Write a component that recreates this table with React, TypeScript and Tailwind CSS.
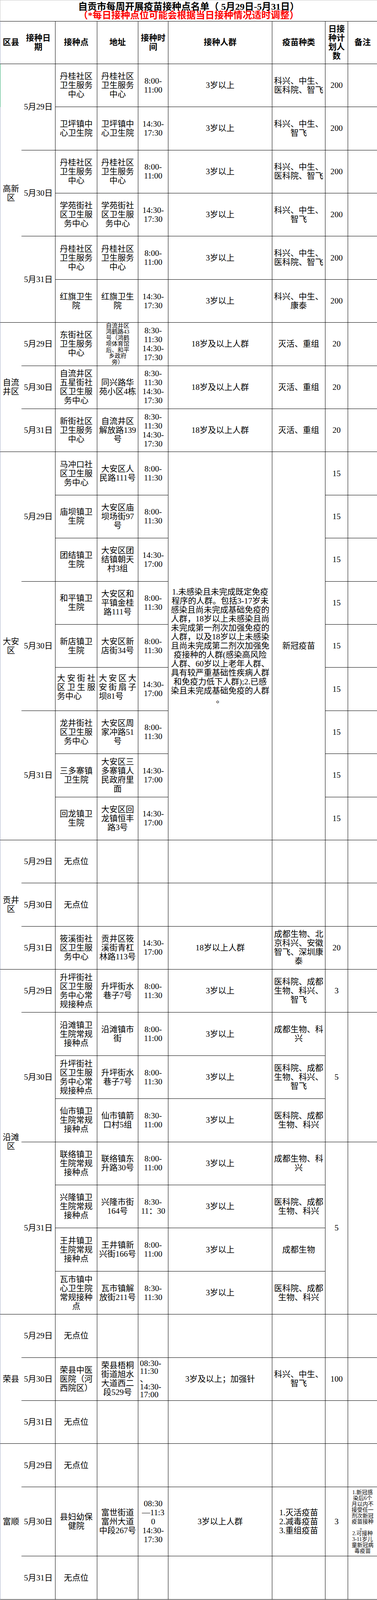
import React from "react";

type Cell = { t: React.ReactNode; s?: number; c?: string } | null;
type Row = { tall?: boolean; cells: Cell[] };

// explicit line breaks, the sheet wraps these cells by hand
const L = (...lines: string[]) =>
  lines.map((l, i) => (
    <React.Fragment key={i}>
      {i > 0 && <br />}
      {l}
    </React.Fragment>
  ));

const c = (t: React.ReactNode, s?: number, cls?: string): Cell => ({ t, s, c: cls });
const E: Cell = { t: "" };
const N: Cell = null;

// distributed lines (excel "分散对齐")
function Spread({ lines, last }: { lines: string[]; last: string }) {
  return (
    <div className="pb-[10px]">
      {lines.map((l) => (
        <div key={l} className="flex justify-between">
          {Array.from(l).map((ch, i) => (
            <span key={i}>{ch}</span>
          ))}
        </div>
      ))}
      <div className="text-left">{last}</div>
    </div>
  );
}

const dan = "丹桂社区卫生服务中心";
const sp = "升坪街社区卫生服务中心常规接种点";
const t8_11 = L("8:00-", "11:00");
const t8_1130 = L("8:00-", "11:30");
const t1430_1730 = L("14:30-", "17:30");
const t1430_1700 = L("14:30-", "17:00");
const tZ = L("8:30-", "11:30", "14:30-", "17:30");
const v4 = L("科兴、中生、", "医科院、智飞");
const v3 = L("科兴、中生、", "智飞");
const vYCKZ = L("医科院、成都", "生物、科兴、", "智飞");
const vCK = L("成都生物、科", "兴");
const vYCK = L("医科院、成都", "生物、科兴");

const daan = [
  "1.未感染且未完成既定免疫",
  "程序的人群。包括3-17岁未",
  "感染且尚未完成基础免疫的",
  "人群，18岁以上未感染且尚",
  "未完成第一剂次加强免疫的",
  "人群，以及18岁以上未感染",
  "且尚未完成第二剂次加强免",
  "疫接种的人群(感染高风险",
  "人群、60岁以上老年人群、",
  "具有较严重基础性疾病人群",
  "和免疫力低下人群);2.已感",
  "染且未完成基础免疫的人群",
  "。",
];

const none = (date: string): Cell[] => [c(date), c("无点位"), E, E, E, E, E, E];

const ROWS: Row[] = [
  // 高新区
  { cells: [c("高新区", 6), c("5月29日", 2), c(dan), c(dan), c(t8_11), c("3岁以上"), c(v4), c("200"), E] },
  { cells: [N, N, c("卫坪镇中心卫生院"), c("卫坪镇中心卫生院"), c(t1430_1730), c("3岁以上"), c(v3), c("200"), E] },
  { cells: [N, c("5月30日", 2), c(dan), c(dan), c(t8_11), c("3岁以上"), c(v4), c("200"), E] },
  { cells: [N, N, c("学苑街社区卫生服务中心"), c("学苑街社区卫生服务中心"), c(t1430_1730), c("3岁以上"), c(v3), c("200"), E] },
  { cells: [N, c("5月31日", 2), c(dan), c(dan), c(t8_11), c("3岁以上"), c(v4), c("200"), E] },
  { cells: [N, N, c("红旗卫生院"), c("红旗卫生院"), c(t1430_1730), c("3岁以上"), c(L("科兴、中生、", "康泰")), c("200"), E] },
  // 自流井区
  {
    cells: [
      c("自流井区", 3),
      c("5月29日"),
      c("东街社区卫生服务中心"),
      c(L("自流井区", "鸿鹤路43", "号（鸿鹤", "坝体育馆", "后、和平", "乡政府", "旁）"), undefined, "text-[15px] leading-[15.5px]"),
      c(tZ),
      c("18岁及以上人群"),
      c("灭活、重组"),
      c("20"),
      E,
    ],
  },
  { cells: [N, c("5月30日"), c("自流井区五星街社区卫生服务中心"), c("同兴路华苑小区4栋"), c(tZ), c("18岁及以上人群"), c("灭活、重组"), c("20"), E] },
  { cells: [N, c("5月31日"), c("新街社区卫生服务中心"), c("自流井区解放路139号"), c(tZ), c("18岁及以上人群"), c("灭活、重组"), c("20"), E] },
  // 大安区
  {
    cells: [
      c("大安区", 9),
      c("5月29日", 3),
      c("马冲口社区卫生服务中心"),
      c("大安区人民路111号"),
      c(t8_1130),
      c(L(...daan), 9, "px-[6px]"),
      c("新冠疫苗", 9),
      c("15"),
      E,
    ],
  },
  { cells: [N, N, c("庙坝镇卫生院"), c("大安区庙坝场街97号"), c(t8_1130), N, N, c("15"), E] },
  { cells: [N, N, c("团结镇卫生院"), c("大安区团结镇朝天村3组"), c(t1430_1700), N, N, c("15"), E] },
  { cells: [N, c("5月30日", 3), c("和平镇卫生院"), c("大安区和平镇金桂路111号"), c(t8_1130), N, N, c("15"), E] },
  { cells: [N, N, c("新店镇卫生院"), c("大安区新店街34号"), c(t8_1130), N, N, c("15"), E] },
  {
    cells: [
      N,
      N,
      c(<Spread lines={["大安街社", "区卫生服"]} last="务中心" />),
      c(<Spread lines={["大安区大", "安街扇子"]} last="坝81号" />),
      c(t1430_1700),
      N,
      N,
      c("15"),
      E,
    ],
  },
  { cells: [N, c("5月31日", 3), c("龙井街社区卫生服务中心"), c("大安区周家冲路51号"), c(t8_1130), N, N, c("15"), E] },
  { cells: [N, N, c("三多寨镇卫生院"), c("大安区三多寨镇人民政府里面"), c(t1430_1700), N, N, c("15"), E] },
  { cells: [N, N, c("回龙镇卫生院"), c("大安区回龙镇恒丰路3号"), c(t1430_1700), N, N, c("15"), E] },
  // 贡井区
  { cells: [c("贡井区", 3), ...none("5月29日")] },
  { cells: [N, ...none("5月30日")] },
  {
    cells: [
      N,
      c("5月31日"),
      c("筱溪街社区卫生服务中心"),
      c("贡井区筱溪街青杠林路113号"),
      c(t1430_1700),
      c("18岁以上人群"),
      c(L("成都生物、北", "京科兴、安徽", "智飞、深圳康", "泰")),
      c("20"),
      E,
    ],
  },
  // 沿滩区
  { cells: [c("沿滩区", 8), c("5月29日"), c(sp), c("升坪街水巷子7号"), c(t8_1130), c("3岁以上"), c(vYCKZ), c("3"), E] },
  { cells: [N, c("5月30日", 3), c("沿滩镇卫生院常规接种点"), c("沿滩镇市街"), c(t8_11), c("3岁以上"), c(vCK), c("5", 3), c("", 3)] },
  { cells: [N, N, c(sp), c("升坪街水巷子7号"), c(t8_1130), c("3岁以上"), c(vYCKZ), N, N] },
  { cells: [N, N, c("仙市镇卫生院常规接种点"), c("仙市镇箭口村5组"), c(L("8:30-", "11:00")), c("3岁以上"), c(vYCK), N, N] },
  { cells: [N, c("5月31日", 4), c("联络镇卫生院常规接种点"), c("联络镇东升路30号"), c(t8_11), c("3岁以上"), c(vCK), c("5", 4), c("", 4)] },
  { cells: [N, N, c("兴隆镇卫生院常规接种点"), c("兴隆市街164号"), c(L("8:30-", "11：30")), c("3岁以上"), c(vYCK), N, N] },
  { cells: [N, N, c("王井镇卫生院常规接种点"), c("王井镇新兴街166号"), c(t8_11), c("3岁以上"), c("成都生物"), N, N] },
  { cells: [N, N, c("瓦市镇中心卫生院常规接种点"), c("瓦市镇解放街211号"), c(L("8:30-", "11:30")), c("3岁以上"), c(vYCK), N, N] },
  // 荣县
  { cells: [c("荣县", 3), ...none("5月29日")] },
  {
    cells: [
      N,
      c("5月30日"),
      c("荣县中医医院（河西院区）"),
      c("荣县梧桐街道旭水大道西二段529号"),
      c(L("08:30-", "11:30", "、", "14:30-", "17:00"), undefined, "text-left leading-[20px]"),
      c("3岁及以上；加强针"),
      c(v3),
      c("100"),
      E,
    ],
  },
  { cells: [N, ...none("5月31日")] },
  // 富顺
  { cells: [c("富顺", 3), ...none("5月29日")] },
  {
    tall: true,
    cells: [
      N,
      c("5月30日"),
      c("县妇幼保健院"),
      c("富世街道富州大道中段267号"),
      c(L("08:30", "—11:3", "0", "14:30-", "17:30")),
      c("3岁以上人群"),
      c(L("1.灭活疫苗", "2.减毒疫苗", "3.重组疫苗")),
      c("3"),
      c(
        L("1.新冠感", "染后6个", "月以内不", "接受任一", "剂次新冠", "疫苗接种", "。", "2.可接种", "3-11岁儿", "童新冠病", "毒疫苗"),
        undefined,
        "px-0 text-[14px] leading-[15px]"
      ),
    ],
  },
  { cells: [N, ...none("5月31日")] },
];

const HEAD = ["区县", "接种日期", "接种点", "地址", "接种时间", "接种人群", "疫苗种类", "日接种计划人数", "备注"];

const colCls = [
  "border-l border-l-[#a4abc6]",
  "border-r",
  "border-r",
  "border-r",
  "border-r",
  "border-r",
  "border-r",
  "border-r",
  "",
];

const td = "border-b border-black px-1 text-center align-middle";

export default function App() {
  return (
    <div className="relative w-[965px] bg-white text-black font-['Liberation_Serif','Noto_Sans_CJK_SC',serif] text-[21px] leading-[23px]">
      <div className="h-[53.5px] border-t border-l border-[#c8c8c8] pt-[5px] text-center font-bold text-[24px] leading-[22px]">
        <div>自贡市每周开展疫苗接种点名单（ 5月29日-5月31日）</div>
        <div className="text-[#ff0000]">（*每日接种点位可能会根据当日接种情况适时调整）</div>
      </div>
      <table className="w-[965px] table-fixed border-separate border-spacing-0">
        <colgroup>
          <col className="w-[55px]" />
          <col className="w-[87px]" />
          <col className="w-[107px]" />
          <col className="w-[105px]" />
          <col className="w-[77px]" />
          <col className="w-[266px]" />
          <col className="w-[136px]" />
          <col className="w-[58px]" />
          <col className="w-[74px]" />
        </colgroup>
        <tbody>
          <tr className="h-[110.4px]">
            {HEAD.map((h, i) => (
              <td key={h} className={`${td} ${colCls[i]} border-t font-bold`}>
                {h}
              </td>
            ))}
          </tr>
          {ROWS.map((r, ri) => (
            <tr key={ri} className={r.tall ? "h-[177.6px]" : "h-[110.4px]"}>
              {r.cells.map((cell, i) =>
                cell ? (
                  <td key={i} rowSpan={cell.s} className={`${td} ${colCls[i]} ${cell.c ?? ""}`}>
                    {cell.t}
                  </td>
                ) : null
              )}
            </tr>
          ))}
        </tbody>
      </table>
      {/* excel selection mark on the first data row */}
      <div className="absolute left-0 top-[164px] h-[110px] w-px bg-[#21a366]" />
    </div>
  );
}
